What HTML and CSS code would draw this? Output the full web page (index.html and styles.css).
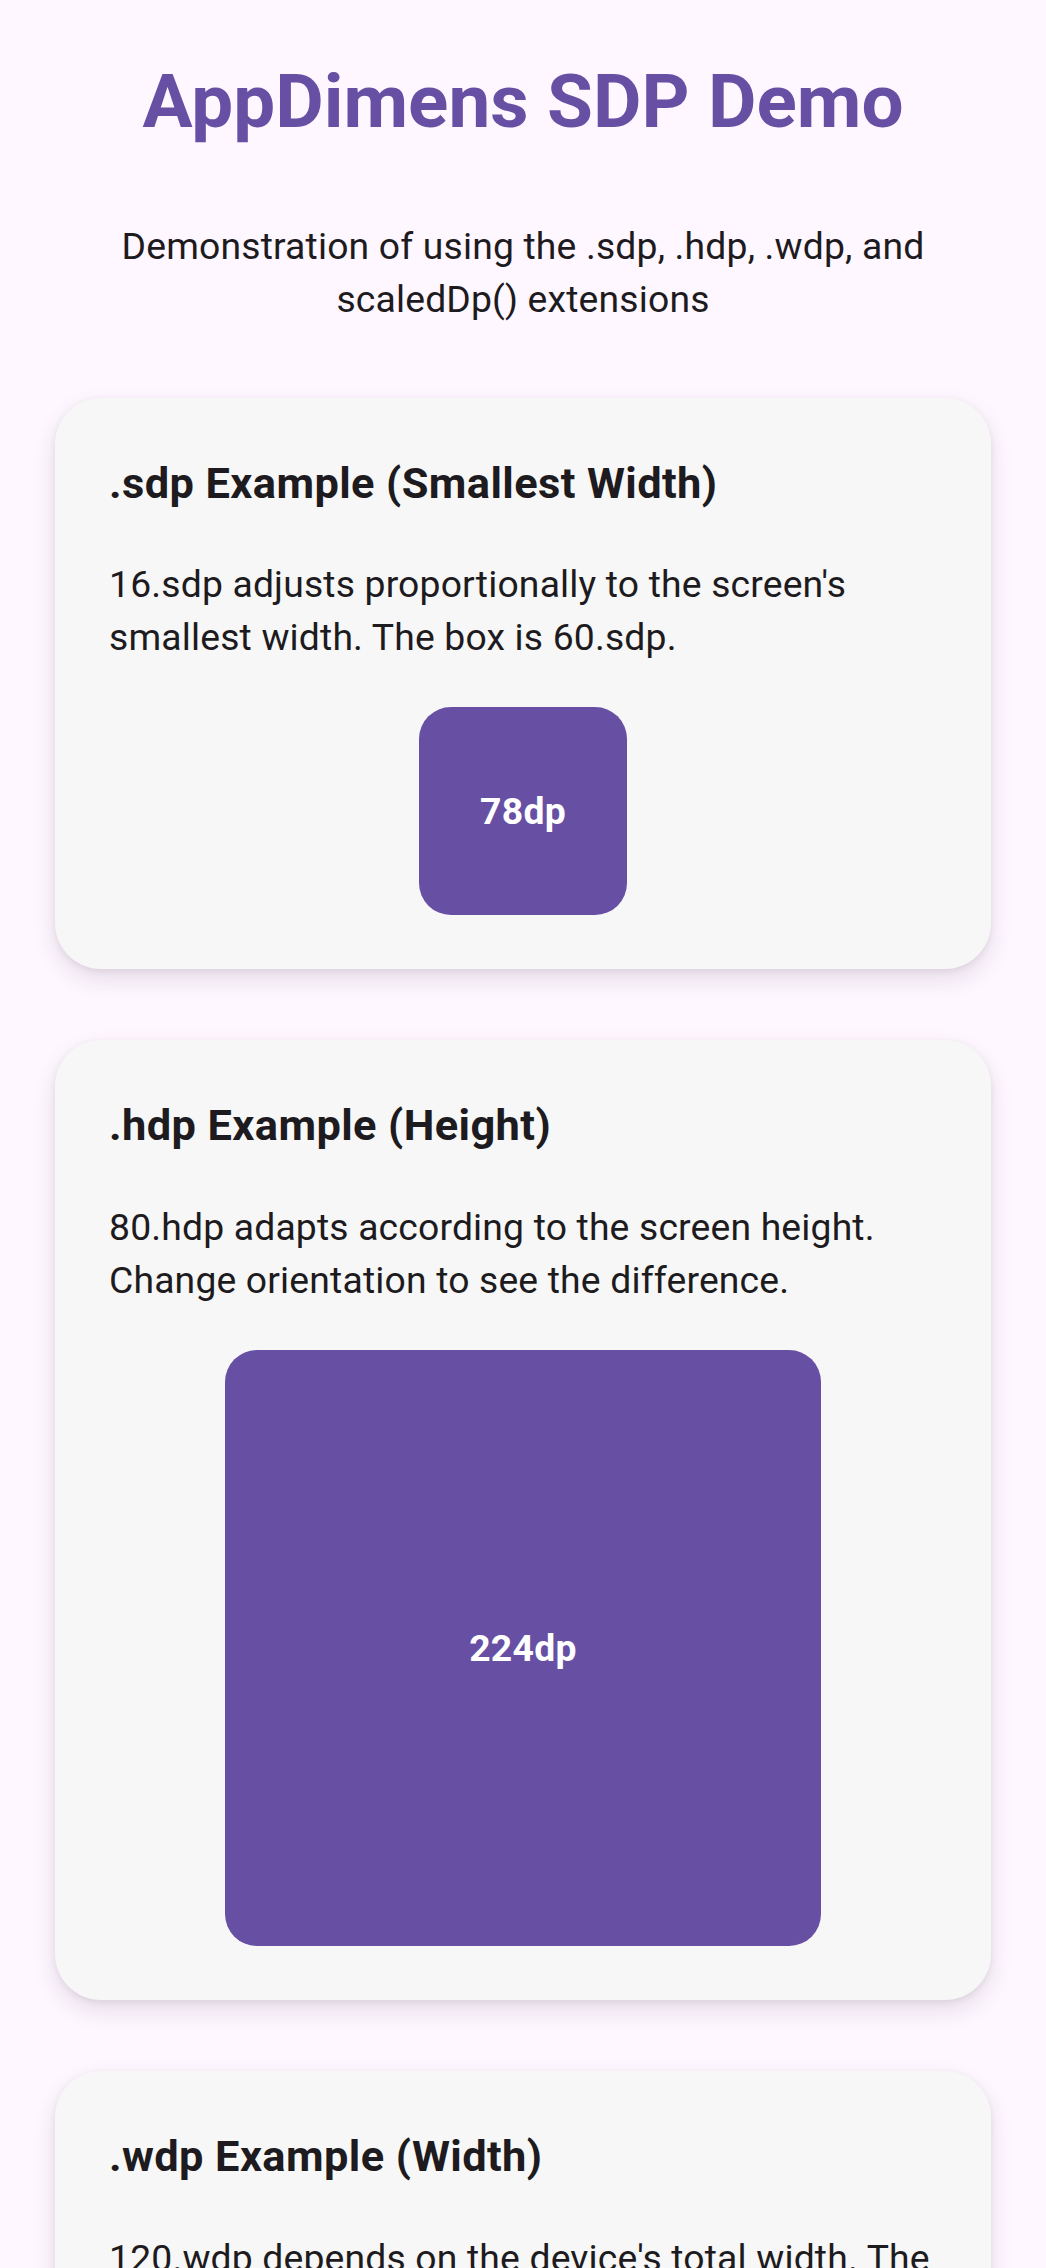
FILE: index.html
```html
<!DOCTYPE html>
<html lang="en">
<head>
<meta charset="utf-8">
<title>AppDimens SDP Demo</title>
<link rel="stylesheet" href="styles.css">
</head>
<body>
<main class="screen">
  <h1 class="title">AppDimens SDP Demo</h1>
  <p class="subtitle">Demonstration of using the .sdp, .hdp, .wdp, and scaledDp() extensions</p>

  <section class="card">
    <h2 class="card-title">.sdp Example (Smallest Width)</h2>
    <p class="card-text">16.sdp adjusts proportionally to the screen's smallest width. The box is 60.sdp.</p>
    <div class="box box-sdp"><span>78dp</span></div>
  </section>

  <section class="card">
    <h2 class="card-title">.hdp Example (Height)</h2>
    <p class="card-text">80.hdp adapts according to the screen height. Change orientation to see the difference.</p>
    <div class="box box-hdp"><span>224dp</span></div>
  </section>

  <section class="card">
    <h2 class="card-title">.wdp Example (Width)</h2>
    <p class="card-text">120.wdp depends on the device's total width. The box is 120.wdp wide.</p>
    <div class="box box-wdp"><span>320dp</span></div>
  </section>
</main>
</body>
</html>
```

FILE: styles.css
```css
html, body {
  margin: 0;
  padding: 0;
  background: #fef7ff;
}

body {
  font-family: Roboto, "Noto Sans", "Liberation Sans", sans-serif;
  color: #1d1b20;
}

.screen {
  display: flex;
  flex-direction: column;
  align-items: stretch;
  padding: 54px 55px 80px;
}

.title {
  margin: 0;
  font-size: 74.6px;
  line-height: 96px;
  font-weight: 700;
  color: #6750a4;
  text-align: center;
  letter-spacing: 0;
}

.subtitle {
  margin: 70px 0 71px;
  font-size: 37.3px;
  line-height: 53.3px;
  font-weight: 400;
  letter-spacing: 0.17px;
  text-align: center;
  color: #1d1b20;
}

.card {
  display: flex;
  flex-direction: column;
  align-items: stretch;
  gap: 42.6px;
  padding: 54px;
  background: #f7f7f7;
  border-radius: 46px;
  box-shadow: 0 10px 22px rgba(60, 40, 70, 0.13), 0 2px 6px rgba(60, 40, 70, 0.08);
  margin-bottom: 71px;
}

.card-title {
  margin: 0;
  font-size: 43.4px;
  line-height: 64px;
  font-weight: 700;
  letter-spacing: 0.4px;
  color: #1d1b20;
}

.card-text {
  margin: 0;
  font-size: 37.3px;
  line-height: 53.3px;
  font-weight: 400;
  letter-spacing: 0.17px;
  color: #1d1b20;
}

.box {
  align-self: center;
  display: flex;
  align-items: center;
  justify-content: center;
  background: #6750a4;
  border-radius: 32px;
  color: #ffffff;
  font-size: 37.3px;
  font-weight: 700;
  letter-spacing: 0.3px;
}

.box-sdp {
  width: 208px;
  height: 208px;
}

.box-hdp {
  width: 596px;
  height: 596px;
}

.box-wdp {
  width: 600px;
  height: 320px;
}
```
